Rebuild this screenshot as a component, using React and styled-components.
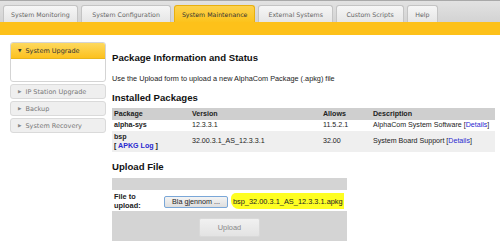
import React from "react";
import styled, { createGlobalStyle } from "styled-components";

const GlobalStyle = createGlobalStyle`
  html, body {
    margin: 0;
    padding: 0;
    background: #fff;
  }
  body {
    width: 500px;
    height: 241px;
    overflow: hidden;
    font-family: "Liberation Sans", Arial, sans-serif;
  }
`;

const Page = styled.div`
  width: 500px;
  height: 241px;
  overflow: hidden;
`;

const TopBar = styled.div`
  display: flex;
  align-items: flex-end;
  gap: 3px;
  height: 22px;
  padding-left: 3px;
  box-sizing: border-box;
  border-top: 1px solid #a9a9a9;
  background: linear-gradient(#e2e2e2, #d3d3d3);
`;

const Tab = styled.div`
  height: 17px;
  box-sizing: border-box;
  padding: 0 ${props => props.pad || 7}px;
  display: flex;
  align-items: center;
  justify-content: center;
  font-family: "DejaVu Sans", Verdana, sans-serif;
  font-size: 6.25px;
  color: ${props => (props.active ? "#333" : "#666")};
  border: 1px solid ${props => (props.active ? "#e8b010" : "#c4c4c4")};
  border-bottom: none;
  border-radius: 3px 3px 0 0;
  background: ${props =>
    props.active
      ? "linear-gradient(#fdd24e, #fcc31c)"
      : "linear-gradient(#f6f6f6, #e6e6e6)"};
  white-space: nowrap;
`;

const Band = styled.div`
  height: 13px;
  background: #fdc11a;
`;

const Body = styled.div`
  display: flex;
  gap: 6px;
  padding: 7px 0 0 10px;
`;

const Sidebar = styled.div`
  width: 96px;
  display: flex;
  flex-direction: column;
  gap: 2px;
`;

const Panel = styled.div`
  border: 1px solid #d4d4d4;
  border-radius: 3px;
  background: #fff;
  overflow: hidden;
`;

const PanelHead = styled.div`
  height: 15px;
  display: flex;
  align-items: center;
  gap: 4px;
  padding-left: 7px;
  font-family: "DejaVu Sans", Verdana, sans-serif;
  font-size: 6.5px;
  color: #333;
  background: linear-gradient(#fdd95f, #fcc11e);
  border-bottom: 1px solid #e8b51c;
`;

const PanelBody = styled.div`
  height: 22px;
`;

const NavItem = styled.div`
  height: 15px;
  box-sizing: border-box;
  display: flex;
  align-items: center;
  gap: 4px;
  padding-left: 7px;
  font-family: "DejaVu Sans", Verdana, sans-serif;
  font-size: 6.5px;
  color: #777;
  background: #efefef;
  border: 1px solid #dadada;
  border-radius: 3px;
`;

const Arrow = styled.span`
  font-size: 4.5px;
  color: ${props => (props.open ? "#333" : "#888")};
`;

const Main = styled.div`
  width: 383px;
  padding-top: 10px;
`;

const Heading = styled.div`
  font-weight: bold;
  font-size: 9.6px;
  color: #111;
  line-height: 11px;
  margin-bottom: ${props => props.mb || 0}px;
`;

const Note = styled.div`
  font-size: 7.3px;
  color: #222;
  line-height: 9px;
  margin: 11px 0 9px;
`;

const Table = styled.table`
  width: ${props => props.width}px;
  table-layout: fixed;
  border-collapse: collapse;
  font-size: ${props => props.fs || 7.1}px;
  color: #222;
  margin-bottom: ${props => props.mb || 0}px;
  white-space: nowrap;
`;

const Col = styled.col`
  width: ${props => (props.w ? props.w + "px" : "auto")};
`;

const Th = styled.th`
  text-align: left;
  font-weight: bold;
  background: #cfcfcf;
  height: 12px;
  padding: 0 2px;
`;

const Row = styled.tr`
  background: ${props => props.bg || "#fff"};
`;

const Td = styled.td`
  padding: 0 2px;
  height: ${props => (props.h ? props.h + "px" : "auto")};
  font-weight: ${props => (props.bold ? "bold" : "normal")};
  line-height: 9px;
  vertical-align: middle;
  overflow: visible;
`;

const Link = styled.span`
  color: #2a2ad0;
`;

const GreyRow = styled.tr`
  background: #d4d4d4;
`;

const GreyCell = styled.td`
  height: ${props => props.h}px;
  padding: 0;
  text-align: center;
`;

const FileButton = styled.span`
  display: inline-block;
  height: 10px;
  line-height: 10px;
  padding: 0 7px;
  font-size: 7.2px;
  border: 1px solid #7aa7d8;
  border-radius: 2px;
  background: linear-gradient(#f4f4f4, #dedede);
  color: #222;
`;

const FileName = styled.span`
  display: inline-block;
  margin-left: 3px;
  padding: 4px 1px 3px 2px;
  background: #fefe22;
  border-radius: 5px 0 0 8px;
  color: #222;
`;

const UploadButton = styled.span`
  display: inline-block;
  width: 59px;
  height: 17px;
  line-height: 17px;
  font-size: 7.4px;
  color: #888;
  background: linear-gradient(#f1f1f1, #e3e3e3);
  border: 1px solid #d9d9d9;
  border-radius: 2px;
`;

const tabs = [
  { label: "System Monitoring", pad: 7 },
  { label: "System Configuration", pad: 10.5 },
  { label: "System Maintenance", pad: 6.5, active: true },
  { label: "External Systems", pad: 9.5 },
  { label: "Custom Scripts", pad: 9 },
  { label: "Help", pad: 7.5 },
];

const navItems = ["IP Station Upgrade", "Backup", "System Recovery"];

export default function App() {
  return (
    <Page>
      <GlobalStyle />
      <TopBar>
        {tabs.map(t => (
          <Tab key={t.label} active={t.active} pad={t.pad}>
            {t.label}
          </Tab>
        ))}
      </TopBar>
      <Band />
      <Body>
        <Sidebar>
          <Panel>
            <PanelHead>
              <Arrow open>▼</Arrow>System Upgrade
            </PanelHead>
            <PanelBody />
          </Panel>
          {navItems.map(n => (
            <NavItem key={n}>
              <Arrow>▶</Arrow>
              {n}
            </NavItem>
          ))}
        </Sidebar>
        <Main>
          <Heading>Package Information and Status</Heading>
          <Note>Use the Upload form to upload a new AlphaCom Package (.apkg) file</Note>
          <Heading mb={5}>Installed Packages</Heading>
          <Table width={383} mb={9}>
            <colgroup>
              <Col w={78} />
              <Col w={131} />
              <Col w={50} />
              <Col />
            </colgroup>
            <thead>
              <tr>
                <Th>Package</Th>
                <Th>Version</Th>
                <Th>Allows</Th>
                <Th>Description</Th>
              </tr>
            </thead>
            <tbody>
              <Row>
                <Td bold h={11}>alpha-sys</Td>
                <Td>12.3.3.1</Td>
                <Td>11.5.2.1</Td>
                <Td>
                  AlphaCom System Software [<Link>Details</Link>]
                </Td>
              </Row>
              <Row bg="#efefef">
                <Td bold h={21}>
                  bsp
                  <br />[ <Link>APKG Log</Link> ]
                </Td>
                <Td>32.00.3.1_AS_12.3.3.1</Td>
                <Td>32.00</Td>
                <Td>
                  System Board Support [<Link>Details</Link>]
                </Td>
              </Row>
            </tbody>
          </Table>
          <Heading mb={6}>Upload File</Heading>
          <Table width={235} fs={7.4}>
            <colgroup>
              <Col w={50} />
              <Col />
            </colgroup>
            <tbody>
              <GreyRow>
                <GreyCell h={12} colSpan={2} />
              </GreyRow>
              <Row>
                <Td bold h={21}>
                  File to
                  <br />
                  upload:
                </Td>
                <Td>
                  <FileButton>Bla gjennom ...</FileButton>
                  <FileName>bsp_32.00.3.1_AS_12.3.3.1.apkg</FileName>
                </Td>
              </Row>
              <GreyRow>
                <GreyCell h={32} colSpan={2}>
                  <UploadButton>Upload</UploadButton>
                </GreyCell>
              </GreyRow>
            </tbody>
          </Table>
        </Main>
      </Body>
    </Page>
  );
}
